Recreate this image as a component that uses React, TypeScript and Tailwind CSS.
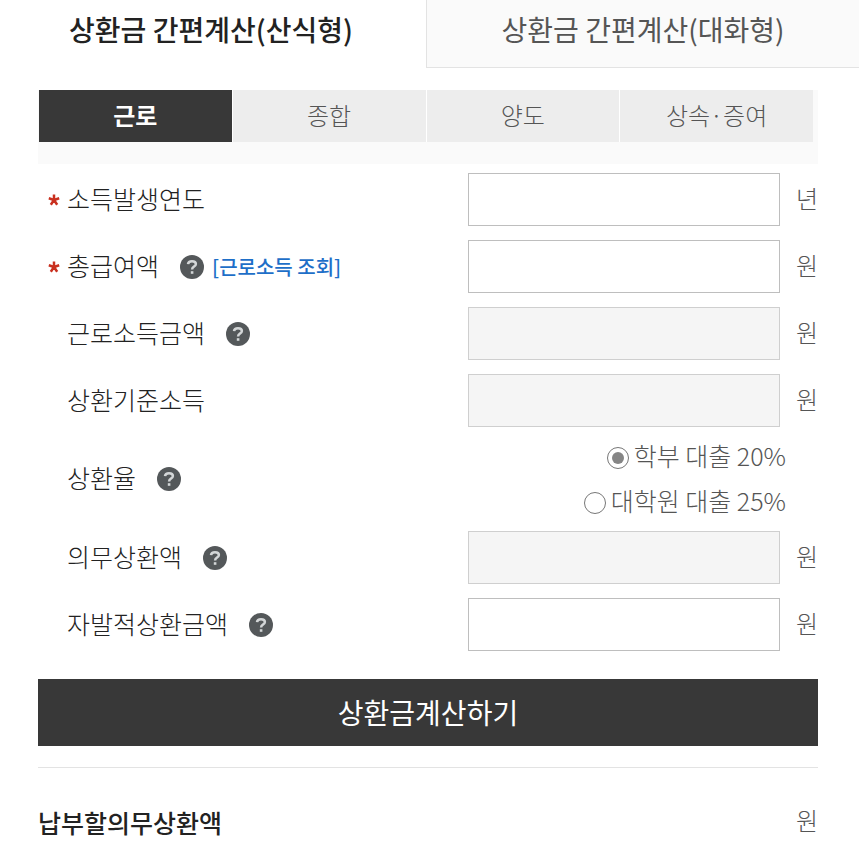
import { useState } from "react";
import type { ReactNode } from "react";

const incomeTabs = ["근로", "종합", "양도", "상속·증여"];

const rates = [
  { id: "undergraduate", label: "학부 대출 20%" },
  { id: "graduate", label: "대학원 대출 25%" },
];

function HelpButton({ topic }: { topic: string }) {
  return (
    <button type="button" aria-label={`${topic} 도움말`} className="ml-[21px] h-6 w-6 shrink-0">
      <svg viewBox="0 0 24 24" className="h-6 w-6" aria-hidden="true">
        <circle cx="12" cy="12" r="12" fill="#54585a" />
        <path
          d="M8 9.200C8.200 7.200 9.800 6.200 12 6.200c2.400 0 3.900 1.100 3.900 2.800 0 1.400-.8 2-2 2.600-1.200.7-1.800 1.200-1.800 2.800"
          fill="none"
          stroke="#d3d6d7"
          strokeWidth="2.500"
        />
        <rect x="10.800" y="16.200" width="2.600" height="2.600" fill="#d3d6d7" />
      </svg>
    </button>
  );
}

type FieldProps = {
  id: string;
  label: string;
  unit: string;
  required?: boolean;
  help?: boolean;
  readOnly?: boolean;
  children?: ReactNode;
};

function Field({ id, label, unit, required, help, readOnly, children }: FieldProps) {
  return (
    <div className="flex items-center">
      <div className="flex flex-1 items-center">
        <RequiredMark show={required} />
        <label htmlFor={id} className="pb-1 text-[#222]">
          {label}
        </label>
        {help && <HelpButton topic={label} />}
        {children}
      </div>
      <input
        id={id}
        type="text"
        required={required}
        readOnly={readOnly}
        className="h-[53px] w-2/5 border border-[#bebebe] bg-white px-3 read-only:border-[#cfcfcf] read-only:bg-[#f5f5f5]"
      />
      <span className="w-[38px] pb-1 text-right text-2xl leading-8">{unit}</span>
    </div>
  );
}

function RequiredMark({ show }: { show?: boolean }) {
  return (
    <span className="flex w-[29px] shrink-0 pl-[10px]" aria-hidden="true">
      {show && (
        <svg viewBox="0 0 12 12" className="h-3 w-3">
          <path
            d="M6 6V.6M6 6 .8 4.300M6 6l5.200-1.700M6 6l-3.200 4.800M6 6l3.200 4.800"
            stroke="#c9301f"
            strokeWidth="2.500"
            fill="none"
          />
        </svg>
      )}
    </span>
  );
}

export default function App() {
  const [tab, setTab] = useState(0);
  const [rate, setRate] = useState("undergraduate");

  return (
    <div className="min-h-screen bg-white font-['Noto_Sans_CJK_KR',sans-serif] text-[25px] leading-8 font-light text-[#555]">
      <nav className="flex h-[68px] text-[28px]">
        <button type="button" className="w-[426px] max-w-1/2 pr-1 pb-[10px] font-medium text-[#222]">
          상환금 간편계산(산식형)
        </button>
        <button
          type="button"
          className="flex-1 border-b border-l border-[#e3e3e3] bg-[#fafafa] pb-[10px] font-normal"
        >
          상환금 간편계산(대화형)
        </button>
      </nav>

      <main className="mr-[41px] ml-[38px]">
        <div className="mt-[22px] bg-[#fafafa] pr-[5px] pb-[22px] pl-px">
          <div className="grid grid-cols-4 gap-px bg-white text-2xl leading-8">
            {incomeTabs.map((name, i) => (
              <button
                key={name}
                type="button"
                aria-pressed={tab === i}
                onClick={() => setTab(i)}
                className={
                  tab === i
                    ? "h-[52px] bg-[#383838] pb-[2px] font-bold text-white"
                    : "h-[52px] bg-[#ededed] pb-[2px]"
                }
              >
                {name}
              </button>
            ))}
          </div>
        </div>

        <form onSubmit={(e) => e.preventDefault()}>
          <div className="mt-[9px] flex flex-col gap-[14px]">
            <Field id="year" label="소득발생연도" unit="년" required />
            <Field id="salary" label="총급여액" unit="원" required help>
              <a href="#income" className="ml-2 text-xl font-medium text-[#1e6fc8]">
                [근로소득 조회]
              </a>
            </Field>
            <Field id="earned" label="근로소득금액" unit="원" help readOnly />
            <Field id="base" label="상환기준소득" unit="원" readOnly />

            <div className="flex items-center" role="radiogroup" aria-labelledby="rate-label">
              <div className="flex flex-1 items-center">
                <RequiredMark />
                <span id="rate-label" className="pb-1 text-[#222]">
                  상환율
                </span>
                <HelpButton topic="상환율" />
              </div>
              <div className="flex flex-col items-end gap-[14px] pr-8">
                {rates.map(({ id, label }) => (
                  <label key={id} className="flex h-[31px] items-center gap-[5px]">
                    <input
                      type="radio"
                      name="rate"
                      value={id}
                      checked={rate === id}
                      onChange={() => setRate(id)}
                      className="mt-[2px] h-[22px] w-[22px] appearance-none rounded-full border border-[#777] bg-white bg-clip-content p-1 checked:bg-[#858585]"
                    />
                    <span className="pb-1">{label}</span>
                  </label>
                ))}
              </div>
            </div>

            <Field id="duty" label="의무상환액" unit="원" help readOnly />
            <Field id="voluntary" label="자발적상환금액" unit="원" help />
          </div>

          <button
            type="submit"
            className="mt-7 h-[67px] w-full bg-[#383838] pb-[2px] text-[28px] font-normal text-white"
          >
            상환금계산하기
          </button>
        </form>

        <div className="mt-[21px] flex items-center justify-between border-t border-[#e3e3e3] pt-9">
          <span className="font-medium text-[#222]">납부할의무상환액</span>
          <span className="pb-1 text-2xl leading-8">원</span>
        </div>
      </main>
    </div>
  );
}
